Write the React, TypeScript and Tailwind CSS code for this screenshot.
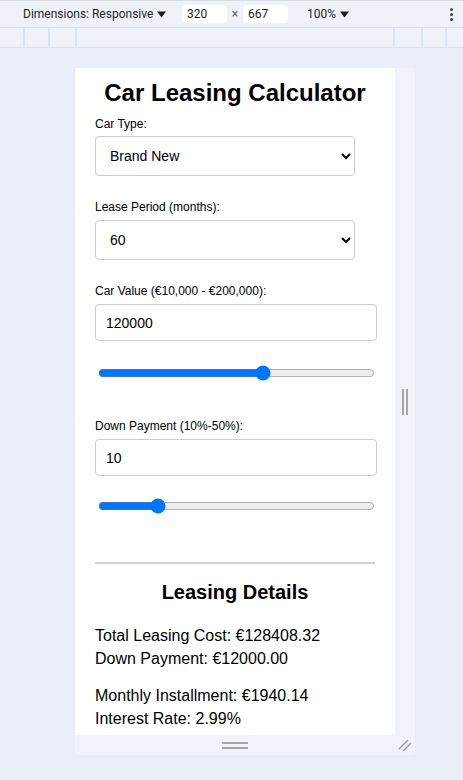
function Caret() {
  return (
    <svg width="9" height="7" viewBox="0 0 9 7" className="ml-[4px]">
      <path d="M0 0.5h9L4.5 6.5z" fill="#1f1f1f" />
    </svg>
  )
}

function Toolbar() {
  return (
    <div className="flex items-center h-[28px] border-t border-[#dadce0] border-b border-b-[#d3e3fd] bg-[#eff2f9] text-[12px] text-[#1f1f1f] font-['Roboto','Noto_Sans',sans-serif]">
      <div className="w-[182px] pl-[23px] flex items-center">
        <span>Dimensions: Responsive</span>
        <Caret />
      </div>
      <div className="w-[45px] h-[18px] bg-white rounded-[4px] pl-[5px] leading-[18px]">320</div>
      <div className="w-[16px] text-center text-[#5f6368]">×</div>
      <div className="w-[45px] h-[18px] bg-white rounded-[4px] pl-[5px] leading-[18px]">667</div>
      <div className="ml-[19px] flex items-center">
        <span>100%</span>
        <Caret />
      </div>
      <div className="ml-auto mr-[10px] flex flex-col gap-[2px]">
        <span className="w-[3px] h-[3px] rounded-full bg-[#444]" />
        <span className="w-[3px] h-[3px] rounded-full bg-[#444]" />
        <span className="w-[3px] h-[3px] rounded-full bg-[#444]" />
      </div>
    </div>
  )
}

function Ruler() {
  const line = 'w-[2px] h-full bg-[#d6e4fc]'
  return (
    <div className="flex h-[20px] border-b border-[#d3e3fd] bg-[#eff2f9]">
      <div className="w-[23px]" />
      <div className={line} />
      <div className="w-[23px]" />
      <div className={line} />
      <div className="w-[25px]" />
      <div className={line} />
      <div className="flex-1" />
      <div className={line} />
      <div className="w-[26px]" />
      <div className={line} />
      <div className="w-[22px]" />
      <div className={line} />
      <div className="w-[16px]" />
    </div>
  )
}

function Viewport() {
  return (
    <div className="h-[667px] overflow-hidden bg-white text-black px-[20px] pt-[11px] font-['Liberation_Sans',Arial,sans-serif]">
      <h1 className="text-[24px] font-bold text-center leading-[normal]">Car Leasing Calculator</h1>

      <label className="block mt-[10px] text-[12px] leading-[normal]">Car Type:</label>
      <select className="block mt-[5px] w-[260px] h-[40px] border border-[#ccc] rounded-[4px] px-[10px] text-[14px] bg-white" defaultValue="new">
        <option value="new">Brand New</option>
        <option value="used">Used</option>
      </select>

      <label className="block mt-[24px] text-[12px] leading-[normal]">Lease Period (months):</label>
      <select className="block mt-[6px] w-[260px] h-[40px] border border-[#ccc] rounded-[4px] px-[10px] text-[14px] bg-white" defaultValue="60">
        <option value="12">12</option>
        <option value="24">24</option>
        <option value="36">36</option>
        <option value="48">48</option>
        <option value="60">60</option>
      </select>

      <label className="block mt-[24px] text-[12px] leading-[normal]">Car Value (€10,000 - €200,000):</label>
      <input
        type="number"
        defaultValue={120000}
        className="block mt-[6px] w-[282px] h-[37px] border border-[#ccc] rounded-[4px] px-[10px] text-[14px]"
      />
      <input type="range" min={0} max={200000} defaultValue={120000} className="block mt-[24px] ml-[3px] w-[277px] h-[16px]" />

      <label className="block mt-[38px] text-[12px] leading-[normal]">Down Payment (10%-50%):</label>
      <input
        type="number"
        defaultValue={10}
        className="block mt-[6px] w-[282px] h-[37px] border border-[#ccc] rounded-[4px] px-[10px] text-[14px]"
      />
      <input type="range" min={0} max={50} defaultValue={10} className="block mt-[22px] ml-[3px] w-[277px] h-[16px]" />

      <div className="mt-[48px] w-[280px] h-[2px] bg-[#d0d0d0]" />

      <h2 className="mt-[17px] text-[20px] font-bold text-center leading-[normal]">Leasing Details</h2>

      <p className="mt-[20px] text-[16px] leading-[23px]">
        Total Leasing Cost: €128408.32
        <br />
        Down Payment: €12000.00
      </p>
      <p className="mt-[14px] text-[16px] leading-[23px]">
        Monthly Installment: €1940.14
        <br />
        Interest Rate: 2.99%
      </p>
    </div>
  )
}

export default function App() {
  return (
    <div className="w-[463px] h-[780px] overflow-hidden bg-[#eaeef6] flex flex-col">
      <Toolbar />
      <Ruler />
      <div className="pt-[20px] pl-[75px]">
        <div className="grid grid-cols-[320px_20px] grid-rows-[667px_20px] w-[340px] bg-[#f0f3f9]">
          <Viewport />
          <div className="flex items-center justify-center gap-[2px]">
            <span className="w-[2px] h-[26px] bg-[#a6a6a6]" />
            <span className="w-[2px] h-[26px] bg-[#a6a6a6]" />
          </div>
          <div className="flex flex-col items-center justify-center gap-[3px]">
            <span className="w-[26px] h-[2px] bg-[#a6a6a6]" />
            <span className="w-[26px] h-[2px] bg-[#a6a6a6]" />
          </div>
          <div className="flex items-center justify-center">
            <svg width="20" height="20" viewBox="0 0 20 20">
              <path d="M4 14L13 5M8 16L16 8" stroke="#a0a0a0" strokeWidth="1.5" />
            </svg>
          </div>
        </div>
      </div>
    </div>
  )
}
